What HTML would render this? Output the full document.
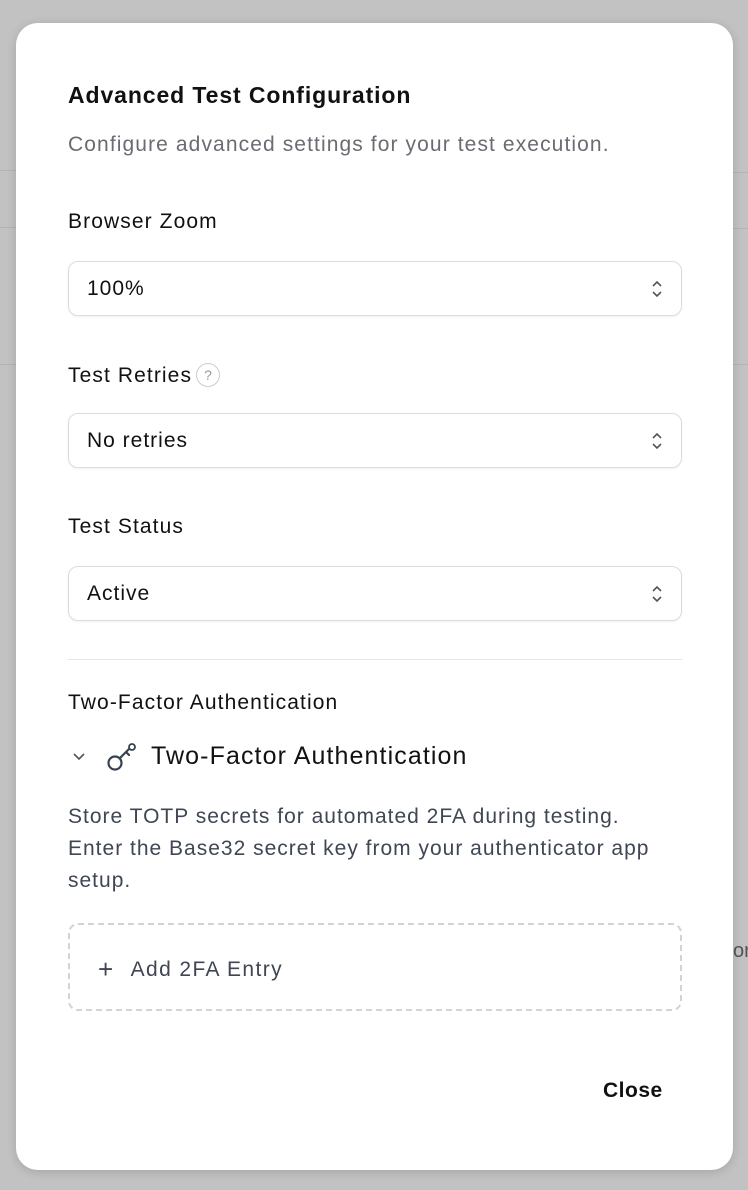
<!DOCTYPE html>
<html><head><style>
body{margin:0;width:748px;height:1190px;background:#c2c2c2;font-family:"Liberation Sans",sans-serif;position:relative;overflow:hidden}
.ln{position:absolute;height:1px;background:#b4b4b4}
.modal{position:absolute;left:16px;top:23px;width:717px;height:1147px;background:#fff;border-radius:22px;box-shadow:0 2px 10px rgba(0,0,0,.15)}
.a{position:absolute;left:52px}
h1{position:absolute;left:52px;top:59px;margin:0;font-size:23px;font-weight:600;color:#111;letter-spacing:.9px}
.sub{top:110px;font-size:21px;color:#6b6b73;letter-spacing:1.1px}
.lbl{font-size:21px;color:#111;font-weight:500;letter-spacing:1.1px}
.sel{position:absolute;left:52px;width:614px;height:55px;border:1px solid #dcdce0;border-radius:10px;box-shadow:0 1px 2px rgba(0,0,0,.06);font-size:21px;letter-spacing:1px;color:#111;line-height:54px;box-sizing:border-box;padding-left:18px}
.sel svg{position:absolute;right:18px;top:17px}
.q{display:inline-block;width:22px;height:22px;border:1px solid #ccc;border-radius:50%;font-size:14px;color:#999;text-align:center;line-height:22px;vertical-align:2px;margin-left:4px;letter-spacing:0}
</style></head><body>
<div class="ln" style="left:0;width:16px;top:170px"></div>
<div class="ln" style="left:0;width:16px;top:227px"></div>
<div class="ln" style="left:0;width:16px;top:364px"></div>
<div class="ln" style="left:733px;width:15px;top:172px"></div>
<div class="ln" style="left:733px;width:15px;top:228px"></div>
<div class="ln" style="left:733px;width:15px;top:364px"></div>
<div style="position:absolute;left:733px;top:940px;font-size:20px;color:#555">or</div>
<div class="modal">
<h1>Advanced Test Configuration</h1>
<div class="a sub">Configure advanced settings for your test execution.</div>
<div class="a lbl" style="top:187px">Browser Zoom</div>
<div class="sel" style="top:238px">100%<svg width="12" height="20" viewBox="0 0 12 20"><path d="M2 7l4-4 4 4M2 13l4 4 4-4" fill="none" stroke="#555" stroke-width="1.6"/></svg></div>
<div class="a lbl" style="top:340px">Test Retries<span class="q">?</span></div>
<div class="sel" style="top:390px">No retries<svg width="12" height="20" viewBox="0 0 12 20"><path d="M2 7l4-4 4 4M2 13l4 4 4-4" fill="none" stroke="#555" stroke-width="1.6"/></svg></div>
<div class="a lbl" style="top:492px">Test Status</div>
<div class="sel" style="top:543px">Active<svg width="12" height="20" viewBox="0 0 12 20"><path d="M2 7l4-4 4 4M2 13l4 4 4-4" fill="none" stroke="#555" stroke-width="1.6"/></svg></div>
<div style="position:absolute;left:52px;top:636px;width:614px;height:1px;background:#e6e6e8"></div>
<div class="a lbl" style="top:668px">Two-Factor Authentication</div>
<svg style="position:absolute;left:56px;top:729px" width="14" height="10" viewBox="0 0 14 10"><path d="M2 2l5 5 5-5" fill="none" stroke="#555" stroke-width="1.6"/></svg>
<svg style="position:absolute;left:90px;top:719px" width="32" height="30" viewBox="0 0 32 30"><circle cx="9" cy="21" r="6.5" fill="none" stroke="#374151" stroke-width="2.2"/><path d="M14 16l9-9M20 10l3 3" fill="none" stroke="#374151" stroke-width="2.2" stroke-linecap="round"/><circle cx="26" cy="5" r="3" fill="none" stroke="#374151" stroke-width="1.8"/></svg>
<div style="position:absolute;left:135px;top:719px;font-size:25px;color:#111;font-weight:500;letter-spacing:1.1px">Two-Factor Authentication</div>
<div class="a" style="top:778px;font-size:21px;line-height:32px;color:#3f4654;width:610px;letter-spacing:1px">Store TOTP secrets for automated 2FA during testing.<br>Enter the Base32 secret key from your authenticator app setup.</div>
<div style="position:absolute;left:52px;top:900px;width:614px;height:88px;border:2px dashed #d0d3d9;border-radius:10px;box-sizing:border-box"></div>
<div style="position:absolute;left:82px;top:931px;font-size:21px;color:#3f4654;letter-spacing:1.4px"><span style="font-size:26px;vertical-align:-2px;margin-right:16px">+</span>Add 2FA Entry</div>
<div style="position:absolute;left:587px;top:1056px;font-size:21px;font-weight:700;color:#111;letter-spacing:.5px">Close</div>
</div>
</body></html>
